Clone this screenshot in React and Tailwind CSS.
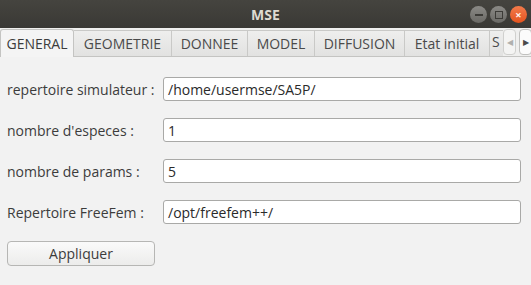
import React from "react";

const tabs = [
  { label: "GEOMETRIE", w: "w-[98px]" },
  { label: "DONNEE", w: "w-[76px]" },
  { label: "MODEL", w: "w-[67px]" },
  { label: "DIFFUSION", w: "w-[90px]" },
  { label: "Etat initial", w: "w-[85px]" },
];

const fields = [
  { label: "repertoire simulateur :", value: "/home/usermse/SA5P/" },
  { label: "nombre d'especes :", value: "1" },
  { label: "nombre de params :", value: "5" },
  { label: "Repertoire FreeFem :", value: "/opt/freefem++/" },
];

export default function App() {
  return (
    <div className="w-[531px] h-[285px] flex flex-col bg-[#f2f2f2] text-[#3c3c3c] font-['Open_Sans',sans-serif] overflow-hidden">
      {/* Title bar */}
      <div className="h-[28px] shrink-0 relative flex items-center justify-center bg-gradient-to-b from-[#45443f] to-[#3a3935]">
        <span className="text-[14px] font-bold text-[#dfdbd2]">MSE</span>
        <div className="absolute right-[4px] top-[6px] flex gap-[3px]">
          <div className="w-[17px] h-[17px] rounded-full bg-gradient-to-b from-[#8b8a86] to-[#6a6965] flex items-center justify-center">
            <div className="w-[8px] h-[2px] bg-[#3c3b37]" />
          </div>
          <div className="w-[17px] h-[17px] rounded-full bg-gradient-to-b from-[#8b8a86] to-[#6a6965] flex items-center justify-center">
            <div className="w-[8px] h-[8px] border-[1.5px] border-[#3c3b37]" />
          </div>
          <div className="w-[17px] h-[17px] rounded-full bg-gradient-to-b from-[#f27a4a] to-[#e4531c] flex items-center justify-center text-[#fff3ec] text-[11px] leading-none font-bold">
            ×
          </div>
        </div>
      </div>

      {/* Tab bar */}
      <div className="h-[29px] shrink-0 flex items-end border-b border-[#c4c4c2] bg-[#efefee]">
        <div className="w-[74px] h-[28px] -mb-px flex items-center justify-center bg-[#f4f4f4] border border-b-0 border-[#c4c4c2] rounded-t-[3px] text-[14px] text-[#3c3c3c]">
          GENERAL
        </div>
        {tabs.map((t) => (
          <div
            key={t.label}
            className={`${t.w} h-[26px] flex items-center justify-center bg-gradient-to-b from-[#eeeeed] to-[#e2e2e1] border-r border-t border-[#c9c9c7] text-[14px] text-[#4a4a4a] whitespace-nowrap`}
          >
            {t.label}
          </div>
        ))}
        <div className="w-[13px] h-[26px] overflow-hidden bg-gradient-to-b from-[#eeeeed] to-[#e2e2e1] border-t border-[#c9c9c7] text-[14px] text-[#4a4a4a] pl-[2px]">
          S
        </div>
        <div className="absolute left-[503px] top-[29px] flex gap-[3px]">
          <div className="w-[13px] h-[26px] rounded-[4px] border border-[#d0d0ce] bg-[#f4f4f3] flex items-center justify-center text-[8px] text-[#b0b0ae]">
            ◀
          </div>
          <div className="w-[13px] h-[26px] rounded-[4px] border border-[#c0c0be] bg-[#fbfbfb] flex items-center justify-center text-[8px] text-[#4a4a4a]">
            ▶
          </div>
        </div>
      </div>

      {/* Content */}
      <div className="flex flex-col pl-[7px] pr-[10px] pt-[20px] gap-[17px]">
        {fields.map((f) => (
          <div key={f.label} className="flex items-center h-[24px]">
            <span className="w-[156px] shrink-0 text-[14px] text-[#3c3c3c] whitespace-nowrap">{f.label}</span>
            <div className="flex-1 h-[24px] bg-white border border-[#a9a9a7] rounded-[3px] flex items-center px-[4px] text-[14px] text-[#2a2a2a]">
              {f.value}
            </div>
          </div>
        ))}
        <button className="w-[148px] h-[25px] rounded-[4px] border border-[#b6b6b4] bg-gradient-to-b from-[#fafafa] to-[#ececeb] text-[14px] text-[#3c3c3c]">
          Appliquer
        </button>
      </div>
    </div>
  );
}
